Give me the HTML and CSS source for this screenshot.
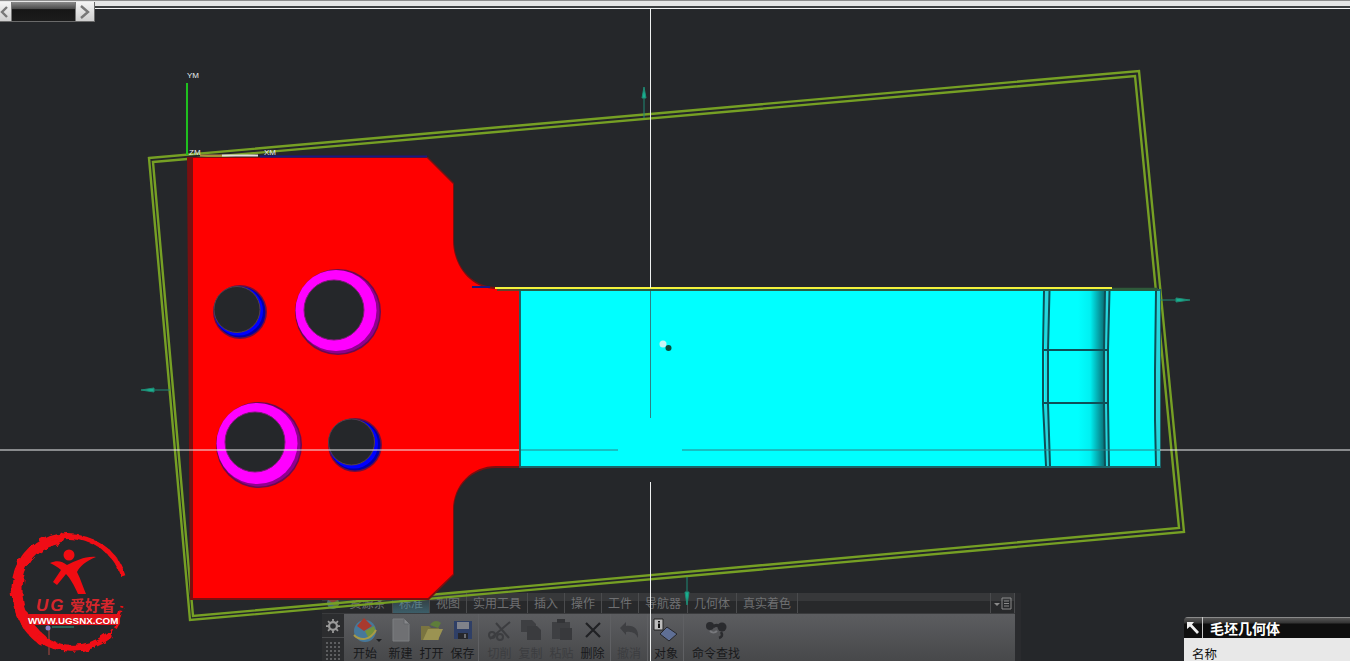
FILE: index.html
```html
<!DOCTYPE html>
<html lang="zh">
<head>
<meta charset="utf-8">
<title>UG 毛坯几何体</title>
<link rel="stylesheet" href="styles.css">
</head>
<body>
<main class="viewport">
  <div class="topstrip"></div>
  <div class="scroller">
    <span class="scroll-btn scroll-left"><svg width="10" height="18" viewBox="0 0 10 18"><path d="M7 4 2 9l5 5" fill="none" stroke="#777" stroke-width="2.400"/></svg></span>
    <span class="scroll-thumb"></span>
    <span class="scroll-btn scroll-right"><svg width="18" height="18" viewBox="0 0 18 18"><path d="M5 3l7 6-7 6" fill="none" stroke="#777" stroke-width="2.400"/></svg></span>
  </div>

  <section class="toolbar">
    <div class="tabs">
      <span class="tab-logo"><svg width="14" height="14" viewBox="0 0 14 14"><circle cx="7" cy="7" r="6" fill="#4a6a78"/><path d="M2 4l5-3 5 3-5 3z" fill="#8a4038"/><path d="M7 7l5-3 1 5-5 3z" fill="#5f7a3c"/></svg></span>
      <span class="tab tab-first">资源条</span>
      <span class="tab tab-active">标准</span>
      <span class="tab tab-s">视图</span>
      <span class="tab tab-xl">实用工具</span>
      <span class="tab tab-s">插入</span>
      <span class="tab tab-s">操作</span>
      <span class="tab tab-s">工件</span>
      <span class="tab tab-l">导航器</span>
      <span class="tab tab-l">几何体</span>
      <span class="tab tab-xl">真实着色</span>
      <span class="tab-fill"></span>
      <span class="tab-menu"><svg width="20" height="14" viewBox="0 0 20 14"><path d="M1 7h6l-3 3z" fill="#8a8a8a"/><path d="M9 2h9v11H9zM11 5h5M11 7.500h5M11 10h5" fill="none" stroke="#8a8a8a"/></svg></span>
    </div>
    <div class="tool-body">
      <div class="rail">
        <span class="rail-gear"><svg width="14" height="14" viewBox="0 0 16 16"><circle cx="8" cy="8" r="4.500" fill="none" stroke="#9a9a9a" stroke-width="2.600"/><path d="M8 0v3M8 13v3M0 8h3M13 8h3M2.300 2.300l2 2M11.700 11.700l2 2M13.700 2.300l-2 2M4.300 11.700l-2 2" stroke="#9a9a9a" stroke-width="2"/></svg></span>
        <span class="rail-dots"></span>
      </div>
      <div class="tools">
        <div class="tool t-start">
          <svg width="26" height="24" viewBox="0 0 26 24"><circle cx="13" cy="13" r="11" fill="#47789a"/><path d="M5 8 12 0l8 8-8 5z" fill="#a83a2e"/><path d="M13 13l9-5 2 6-7 7z" fill="#74923a"/><path d="M2 17c6 6 16 6 22-5" fill="none" stroke="#a89a48" stroke-width="2"/></svg>
          <span class="lbl">开始</span><i class="caret"></i>
        </div>
        <div class="tool t-n">
          <svg width="20" height="24" viewBox="0 0 20 24"><path d="M2 1h11l5 5v17H2z" fill="#6f7073" stroke="#7d7e81"/><path d="M13 1v5h5" fill="#86878a" stroke="#65666a"/></svg>
          <span class="lbl">新建</span>
        </div>
        <div class="tool t-n">
          <svg width="24" height="24" viewBox="0 0 24 24"><path d="M1 8h8l2 2h8v12H1z" fill="#7a7440"/><path d="M3 22 8 11h15l-5 11z" fill="#9b9352"/><path d="M10 7c3-5 8-5 11-2l-3 5z" fill="#5e7d3a"/></svg>
          <span class="lbl">打开</span>
        </div>
        <div class="tool t-n">
          <svg width="20" height="20" viewBox="0 0 20 20"><path d="M1 1h18v18H1z" fill="#2f3f66"/><path d="M4 2h12v7H4z" fill="#80828a"/><path d="M5 13h10v6H5z" fill="#26272c"/><path d="M11 14h2v4h-2z" fill="#6d6e72"/></svg>
          <span class="lbl">保存</span>
        </div>
        <span class="sep sep-a"></span>
        <div class="tool t-n">
          <svg width="24" height="22" viewBox="0 0 24 22"><path d="M2 20 22 3M8 4l13 15" stroke="#3c3d40" stroke-width="2" fill="none"/><circle cx="4" cy="16" r="3" fill="none" stroke="#3c3d40" stroke-width="2"/><circle cx="12" cy="18" r="3" fill="none" stroke="#3c3d40" stroke-width="2"/></svg>
          <span class="lbl off">切削</span>
        </div>
        <div class="tool t-n">
          <svg width="22" height="22" viewBox="0 0 22 22"><path d="M1 1h11l4 4v8H1z" fill="#3e3f42"/><path d="M7 7h10l4 4v10H7z" fill="#3a3b3e"/></svg>
          <span class="lbl off">复制</span>
        </div>
        <div class="tool t-n">
          <svg width="22" height="22" viewBox="0 0 22 22"><path d="M1 3h18v17H1z" fill="#3e3f42"/><path d="M6 0h8v4H6z" fill="#333437"/><path d="M9 9h12v12H9z" fill="#38393c"/></svg>
          <span class="lbl off">粘贴</span>
        </div>
        <div class="tool t-n">
          <svg width="20" height="20" viewBox="0 0 20 20"><path d="M3 3l14 14M17 3 3 17" stroke="#202124" stroke-width="2.200"/></svg>
          <span class="lbl">删除</span>
        </div>
        <span class="sep sep-b"></span>
        <div class="tool t-u">
          <svg width="22" height="18" viewBox="0 0 22 18"><path d="M2 7l6-6v4c8-1 13 3 12 12-2-5-6-7-12-6v3z" fill="#3e3f42"/></svg>
          <span class="lbl off">撤消</span>
        </div>
        <span class="sep sep-c"></span>
        <div class="tool t-o">
          <svg width="26" height="24" viewBox="0 0 26 24"><path d="M1 1h9v11H1z" fill="#bdbdbd" stroke="#222"/><path d="M5 3h2v1.500H5zM5 5.500h2V10H5z" fill="#111"/><path d="M14 9l10 7-8 7-9-7z" fill="#5f6f95" stroke="#26272b"/></svg>
          <span class="lbl">对象</span>
        </div>
        <span class="sep sep-d"></span>
        <div class="tool t-f">
          <svg width="24" height="18" viewBox="0 0 24 18"><circle cx="6" cy="5" r="4" fill="#2a2b2e"/><circle cx="18" cy="6" r="4.500" fill="#2a2b2e"/><path d="M9 6c2-2 4-2 6-1" fill="none" stroke="#2a2b2e" stroke-width="3"/><path d="M17 11c2 3 1 5-2 6" fill="none" stroke="#2a2b2e" stroke-width="2.500"/><path d="M6 10c2 2 5 2 7 0" fill="none" stroke="#77787c" stroke-width="2"/></svg>
          <span class="lbl">命令查找</span>
        </div>
      </div>
    </div>
    <span class="toolbar-edge"></span>
  </section>

  <svg class="scene" width="1350" height="661" viewBox="0 0 1350 661" xmlns="http://www.w3.org/2000/svg">
    <defs>
      <linearGradient id="shade" x1="0" x2="1" y1="0" y2="0">
        <stop offset="0" stop-color="#00ffff"/>
        <stop offset=".45" stop-color="#00f0f2"/>
        <stop offset=".8" stop-color="#059aa0"/>
        <stop offset="1" stop-color="#0a6a70"/>
      </linearGradient>
      <filter id="rough" x="-10%" y="-10%" width="120%" height="120%">
        <feTurbulence type="fractalNoise" baseFrequency="0.13" numOctaves="2" seed="4"/>
        <feDisplacementMap in="SourceGraphic" scale="7"/>
      </filter>
    </defs>
    <g class="box">
      <polygon points="149,158 1139,71 1184,532 190,620"/>
      <polygon points="153,162 1135,76 1179,528 193,616"/>
    </g>
    <path class="red-edge" d="M187 157H428L454 183V240C454 266 472 287 496 287H520V468H496C472 468 454 486 454 510V575L429 600H190Z"/>
    <path class="red" d="M193 158H427L453 184V240C453 267 472 289 496 289H519V466H496C472 466 453 485 453 510V574L428 598H193Z"/>
    <rect class="cyan-edge" x="519" y="289" width="642" height="179"/>
    <rect class="cyan" x="521" y="291" width="639" height="175"/>
    <rect x="1078" y="291" width="27" height="175" fill="url(#shade)"/>
    <rect class="cyan-strip" x="1045" y="291" width="4" height="175"/>
    <rect class="cyan-strip" x="1105" y="291" width="4" height="175"/>
    <rect class="cyan-strip" x="1156" y="291" width="4" height="175"/>
    <path class="part-line" d="M1044 291 1043 350V404L1046 466M1049.500 291 1048 350V404L1050 466M1105 291 1104 350V404L1105 466M1109.500 291 1108 350V404L1109 466M1156 291 1155 370V420L1156 466M1043 350H1108M1043 403H1108"/>
    <path class="yellow" d="M495 288H1112"/>
    <path class="top-dark" d="M497 290H1158M1112 288.500H1158"/>
    <path class="navy" d="M472 287H490M260 156.500H427"/>
    <path class="white-tick" d="M222 155.500H258"/>
    <path class="orange-tick" d="M200 155.500H222"/>
    <g>
      <circle class="h-out" cx="240" cy="312" r="27"/><circle class="h-blue-d" cx="240" cy="312" r="25.500"/><circle class="h-blue" cx="238.500" cy="311" r="24.500"/><circle class="h-in" cx="237" cy="309.500" r="23"/>
      <circle class="h-out" cx="355" cy="445" r="27"/><circle class="h-blue-d" cx="355" cy="445" r="25.500"/><circle class="h-blue" cx="353.500" cy="444" r="24.500"/><circle class="h-in" cx="351.500" cy="442" r="23"/>
      <circle class="m-out" cx="338" cy="312" r="43"/><circle class="m-d" cx="338" cy="312" r="41.500"/><circle class="m" cx="336" cy="310.500" r="40.500"/><circle class="h-in2" cx="334" cy="310" r="30"/>
      <circle class="m-out" cx="259" cy="445" r="43"/><circle class="m-d" cx="259" cy="445" r="41.500"/><circle class="m" cx="257" cy="443.500" r="40.500"/><circle class="h-in2" cx="255" cy="442" r="30"/>
    </g>
    <path class="cross" d="M650.500 8V288M650.500 482V661M0 450H519M1160 450H1350"/>
    <path class="cross-on" d="M650.500 291V418M521 450H618M682 450H1160"/>
    <g class="handle">
      <path d="M644 118V96M1160 300H1178M170 390H152M687 577V595"/>
      <path class="arrow" d="M644 87 642 98H646ZM1190 300 1176 298V302ZM141 390 154 388V392ZM687 605 685 592H689Z"/>
    </g>
    <circle class="dot-l" cx="663" cy="344" r="3.500"/>
    <circle class="dot-d" cx="668.500" cy="348" r="3"/>
    <path class="y-axis" d="M187 83V155"/>
    <text class="cs" x="187" y="78">YM</text>
    <text class="cs" x="189" y="155">ZM</text>
    <text class="cs" x="264" y="155">XM</text>
    <g class="logo">
      <path class="stray" d="M49 628V655"/>
      <circle class="stray-c" cx="48" cy="628" r="2.500"/>
      <g filter="url(#rough)">
        <path class="ring-a" d="M42 640C22 624 14 602 18 578 22 558 38 542 60 538"/>
        <path class="ring-b" d="M40 638C58 652 88 652 108 636"/>
        <path class="ring-c" d="M52 539C74 532 100 540 114 558 119 564 121 570 123 576"/>
        <path class="ring-d" d="M108 636C114 630 119 620 122 606"/>
      </g>
      <circle class="man" cx="69" cy="555" r="5.500"/>
      <path class="man" d="M50 563C57 560 62 561 67 565 76 561 85 556 96 557 86 561 80 566 77 572 81 580 83 587 86 594H78C74 585 70 578 66 574L57 585 53 582 61 570C58 567 54 565 50 563Z"/>
      <text class="logo-ug" x="36" y="611">UG</text>
      <text class="logo-cn" x="70" y="611">爱好者</text>
      <rect class="logo-band" x="27" y="614" width="93" height="11" rx="2"/>
      <text class="logo-url" x="28" y="623.500">WWW.UGSNX.COM</text>
      <path class="logo-teal" d="M52 627H74"/>
    </g>
  </svg>

  <aside class="dialog">
    <header class="dialog-head">
      <span class="dialog-pin"><svg width="14" height="14" viewBox="0 0 14 14"><path d="M1 1h7L6 3.500 13 11l-2 2-7-7.500L1 8z" fill="#eee"/></svg></span>
      <span class="dialog-title">毛坯几何体</span>
    </header>
    <div class="dialog-body">名称</div>
  </aside>
</main>
</body>
</html>
```

FILE: styles.css
```css
* { box-sizing: border-box; }
html, body { margin: 0; height: 100%; overflow: hidden; background: #25272a; }
body { font-family: "Noto Sans CJK SC", "Liberation Sans", sans-serif; }
.viewport { position: relative; width: 1350px; height: 661px; overflow: hidden; background: #25272a; }

.topstrip {
  position: absolute; left: 0; top: 0; width: 1350px; height: 9px;
  background: linear-gradient(#8d8d8d 0 1px, #e6e6e6 1px 6px, #3c3e40 6px 8px, #f2f2f2 8px 9px);
}
.scroller {
  position: absolute; left: 0; top: 2px; width: 95px; height: 20px; display: flex;
  border: solid #6a6a6a; border-width: 0 1px 1px 0; background: #777; z-index: 3;
}
.scroll-btn { display: flex; align-items: center; background: linear-gradient(#f4f4f4, #cfcfcf); }
.scroll-left { width: 11px; }
.scroll-right { width: 18px; }
.scroll-thumb { flex: 1; margin: 0 1px; background: linear-gradient(#8b8b8b, #4c4c4c 35%, #161616 40%, #1c1c1c); }

.toolbar {
  position: absolute; left: 322px; top: 593px; width: 699px; height: 68px;
  display: flex; flex-direction: column; background: #2b2c2f; border-radius: 4px 4px 0 0;
}
.toolbar-edge { position: absolute; right: 0; top: 0; bottom: 0; width: 6px; background: #2a2b2e; }
.tabs {
  height: 21px; display: flex; align-items: stretch; font-size: 12px; line-height: 19px;
  color: #6f7072; background: linear-gradient(#37383a 0 8px, #28292b 8px); border-bottom: 1px solid #3a3b3d;
}
.tab-logo { width: 21px; display: flex; align-items: center; justify-content: center; }
.tab { text-align: center; border-right: 1px solid #4a4b4d; white-space: nowrap; }
.tab-first { width: 50px; }
.tab-active { width: 37px; background: linear-gradient(#2f3134, #3c5e69); color: #5d7f88; }
.tab-s { width: 37px; }
.tab-xl { width: 61px; }
.tab-l { width: 49px; }
.tab-fill { flex: 1; border-right: 1px solid #4a4b4d; }
.tab-menu { width: 24px; margin-right: 6px; display: flex; align-items: center; justify-content: center; border-right: 1px solid #4a4b4d; }
.tool-body { flex: 1; display: flex; min-height: 0; }
.rail { width: 22px; background: #2c2d2f; display: flex; flex-direction: column; align-items: center; }
.rail-gear { height: 24px; width: 22px; display: flex; align-items: center; justify-content: center; border-bottom: 1px solid #4a4b4d; }
.rail-dots {
  width: 16px; flex: 1; margin-top: 3px;
  background-image: radial-gradient(#5d5e60 1px, transparent 1.2px); background-size: 4px 4px;
}
.tools {
  width: 671px; display: flex; align-items: flex-start; padding-left: 6px; overflow: hidden;
  background: linear-gradient(#5c5d60, #47484a);
}
.tool { position: relative; flex: none; height: 47px; display: flex; flex-direction: column; align-items: center; padding-top: 4px; }
.tool svg { flex: none; height: 24px; }
.lbl { font-size: 12px; line-height: 16px; color: #18191b; white-space: nowrap; margin-top: 3px; }
.lbl.off { color: #3c3d40; }
.t-start { width: 30px; margin-right: 5px; }
.t-n { width: 31px; }
.t-u { width: 32px; }
.t-o { width: 34px; }
.t-f { width: 62px; }
.caret { position: absolute; right: -2px; top: 25px; border: 3px solid transparent; border-top-color: #1d1e20; }
.sep { flex: none; width: 1px; height: 47px; background: #5f6063; }
.sep-a { margin: 0 5px 0 0; }
.sep-b { margin: 0 2px 0 2px; }
.sep-c { margin: 0 1px 0 2px; }
.sep-d { margin: 0 1px 0 0; }

.scene { position: absolute; left: 0; top: 0; z-index: 1; display: block; }
.box polygon { fill: none; stroke: #76a024; stroke-width: 2.400; }
.red-edge { fill: #7a0f10; }
.red { fill: #ff0000; }
.cyan-edge { fill: #1c6468; }
.cyan { fill: #00ffff; }
.cyan-strip { fill: #26d6dc; }
.part-line { fill: none; stroke: #0e5058; stroke-width: 2; }
.yellow { stroke: #f4f23c; stroke-width: 2; fill: none; }
.top-dark { stroke: #2e5a3a; stroke-width: 1.500; fill: none; }
.navy { stroke: #1c1880; stroke-width: 2; fill: none; }
.white-tick { stroke: #e8dcdc; stroke-width: 2; }
.orange-tick { stroke: #b08a40; stroke-width: 2; }
.h-out { fill: #700e3c; }
.h-blue-d { fill: #0000a8; }
.h-blue { fill: #0000ff; }
.h-in { fill: #25272a; stroke: #55404a; }
.h-in2 { fill: #25272a; stroke: #7a1a74; }
.m-out { fill: #6a0a50; }
.m-d { fill: #90008e; }
.m { fill: #ff00ff; }
.cross { stroke: #eef0f0; stroke-width: 1; fill: none; }
.cross-on { stroke: #2e8086; stroke-width: 1; fill: none; }
.handle path { stroke: #1f8a74; stroke-width: 1; fill: none; }
.handle .arrow { fill: #18b090; }
.dot-l { fill: #c8f4f4; }
.dot-d { fill: #0b4a3a; }
.y-axis { stroke: #1fc01f; stroke-width: 2; }
.cs { font: 8px "Liberation Sans", sans-serif; fill: #e8eef0; }
.ring-a { fill: none; stroke: #f00c12; stroke-width: 11; stroke-linecap: round; }
.ring-b { fill: none; stroke: #f00c12; stroke-width: 7; stroke-linecap: round; }
.ring-c { fill: none; stroke: #f00c12; stroke-width: 5; }
.ring-d { fill: none; stroke: #f00c12; stroke-width: 3; stroke-dasharray: 8 3 6 4; }
.man { fill: #f00c12; }
.logo-ug { font: italic bold 17px "Liberation Sans", sans-serif; fill: #d6262c; letter-spacing: 2px; }
.logo-cn { font: bold 15px "Noto Sans CJK SC", sans-serif; fill: #d6262c; }
.logo-band { fill: #e01218; }
.logo-url { font: bold 9.800px "Liberation Sans", sans-serif; fill: #fff; }
.logo-teal { stroke: #2a9a80; stroke-width: 1; }
.stray { stroke: #b04a40; stroke-width: 1; }
.stray-c { fill: #8a80c8; }

.dialog { position: absolute; left: 1184px; top: 617px; width: 166px; height: 44px; z-index: 3; display: flex; flex-direction: column; border-radius: 4px 0 0 0; overflow: hidden; }
.dialog-head { flex: none; height: 21px; display: flex; align-items: center; background: linear-gradient(#8a8a8a 0 1px, #555 1px, #333 6px, #0e0e0e 7px); }
.dialog-pin { width: 19px; height: 100%; display: flex; align-items: center; justify-content: center; border-right: 1px solid #c8c8c8; }
.dialog-title { margin-left: 7px; font-size: 14px; font-weight: 700; color: #fff; line-height: 18px; }
.dialog-body { flex: 1; background: #e8e8e8; padding: 8px 0 0 8px; font-size: 12.500px; line-height: 15px; color: #111; }
```
